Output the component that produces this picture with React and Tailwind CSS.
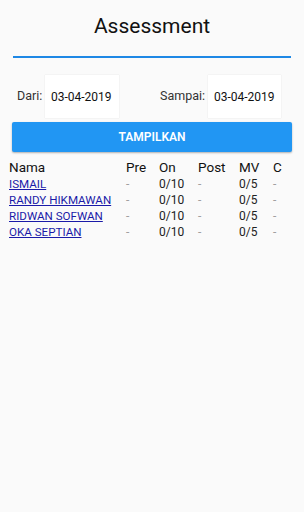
import React from 'react';

const rows = [
  { nama: 'ISMAIL', pre: '-', on: '0/10', post: '-', mv: '0/5', c: '-' },
  { nama: 'RANDY HIKMAWAN', pre: '-', on: '0/10', post: '-', mv: '0/5', c: '-' },
  { nama: 'RIDWAN SOFWAN', pre: '-', on: '0/10', post: '-', mv: '0/5', c: '-' },
  { nama: 'OKA SEPTIAN', pre: '-', on: '0/10', post: '-', mv: '0/5', c: '-' },
];

const cellClass = (v) => (v === '-' ? 'text-[#a0a0a0]' : 'text-[#222]');

export default function App() {
  return (
    <div className="w-[304px] h-[512px] bg-[#fafafa] font-['Roboto',sans-serif] text-[#111]">
      <div className="pt-[13px] text-center text-[21px] leading-[26px]">Assessment</div>
      <div className="mt-[17px] mx-[13px] h-[2px] bg-[#1e88e5]" />

      <div className="mt-[17px] flex items-center h-[43px]">
        <span className="ml-[17px] w-[28px] text-[12.5px] text-[#333]">Dari:</span>
        <div className="w-[74px] h-full bg-white flex items-center pl-[6px] text-[12px] text-[#111] shadow-[0_0_1px_rgba(0,0,0,0.15)]">
          03-04-2019
        </div>
        <span className="ml-[41px] w-[48px] text-[12.5px] text-[#333]">Sampai:</span>
        <div className="w-[73px] h-full bg-white flex items-center pl-[6px] text-[12px] text-[#111] shadow-[0_0_1px_rgba(0,0,0,0.15)]">
          03-04-2019
        </div>
      </div>

      <button className="mt-[4px] mx-[12px] w-[280px] h-[30px] bg-[#2196f3] rounded-[2px] text-white text-[12px] font-semibold shadow-[0_1px_2px_rgba(0,0,0,0.3)]">
        TAMPILKAN
      </button>

      <div className="mt-[7px] ml-[9px] grid grid-cols-[117px_33px_39px_41px_34px_1fr]">
        {['Nama', 'Pre', 'On', 'Post', 'MV', 'C'].map((h) => (
          <div key={h} className="text-[13.5px] leading-[17px] text-[#111]">{h}</div>
        ))}
        {rows.map((r) => (
          <React.Fragment key={r.nama}>
            <a href="#" className="text-[11.6px] leading-[16px] text-[#1a1aa8] underline">{r.nama}</a>
            <div className={`text-[12px] leading-[16px] ${cellClass(r.pre)}`}>{r.pre}</div>
            <div className={`text-[12px] leading-[16px] ${cellClass(r.on)}`}>{r.on}</div>
            <div className={`text-[12px] leading-[16px] ${cellClass(r.post)}`}>{r.post}</div>
            <div className={`text-[12px] leading-[16px] ${cellClass(r.mv)}`}>{r.mv}</div>
            <div className={`text-[12px] leading-[16px] ${cellClass(r.c)}`}>{r.c}</div>
          </React.Fragment>
        ))}
      </div>
    </div>
  );
}
